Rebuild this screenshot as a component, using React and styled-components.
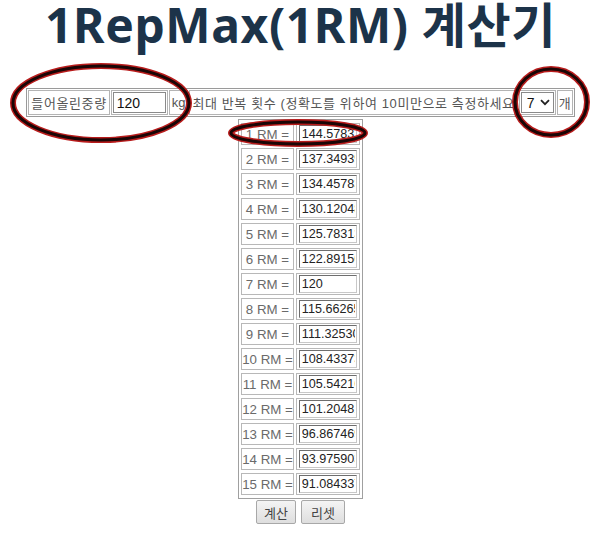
import React from "react";
import styled, { createGlobalStyle } from "styled-components";

const Global = createGlobalStyle`
  html, body { margin: 0; padding: 0; background: #fff; }
  body { font-family: "Liberation Sans", "Noto Sans CJK KR", sans-serif; }
`;

const Page = styled.div`
  position: relative;
  width: 601px;
  height: 537px;
  overflow: hidden;
  display: flex;
  flex-direction: column;
  align-items: center;
`;

const Title = styled.h1`
  margin: 0;
  font-family: "Noto Sans", "Noto Sans CJK KR", sans-serif;
  font-weight: 700;
  font-size: 48px;
  line-height: 50px;
  color: #1c3349;
  letter-spacing: 0.6px;
  white-space: nowrap;
`;

const InputBar = styled.table`
  margin-top: 38px;
  width: 547px;
  border: 1px solid #9a9a9a;
  border-spacing: 1px;
  font-size: 13px;
  color: #555;
  white-space: nowrap;
`;

const BarCell = styled.td`
  border: 1px solid #b4b4b4;
  padding: 1px ${(p) => (p.$tight ? 1 : 2)}px;
  height: 21px;
  text-align: left;
  letter-spacing: ${(p) => (p.$wide ? "0.6px" : "0")};
`;

const WeightInput = styled.input`
  box-sizing: border-box;
  width: 53px;
  height: 21px;
  border: 1px solid #8a8a8a;
  padding: 0 3px;
  font: 14px "Liberation Sans", sans-serif;
  color: #111;
  display: block;
`;

const SelectWrap = styled.div`
  position: relative;
  width: 33px;
  height: 21px;
`;

const RepSelect = styled.select`
  appearance: none;
  box-sizing: border-box;
  width: 33px;
  height: 21px;
  border: 1px solid #8a8a8a;
  background: #fff;
  padding: 0 0 0 5px;
  font: 14px "Liberation Sans", sans-serif;
  color: #111;
  display: block;
`;

const Chevron = styled.svg`
  position: absolute;
  right: 4px;
  top: 7px;
  pointer-events: none;
`;

const ResultTable = styled.table`
  border: 1px solid #a0a0a0;
  border-spacing: 2px 3px;
  margin-top: 2px;
  font-size: 13.3px;
`;

const LabelCell = styled.td`
  box-sizing: border-box;
  width: 52px;
  height: 22px;
  border: 1px solid #b8b8b8;
  padding: 0;
  text-align: center;
  color: #6a6a6a;
  white-space: nowrap;
`;

const ValueCell = styled.td`
  box-sizing: border-box;
  width: 64px;
  height: 22px;
  border: 1px solid #b8b8b8;
  padding: 1px 2px;
`;

const ValueInput = styled.input`
  box-sizing: border-box;
  display: block;
  width: 58px;
  height: 18px;
  border: 1px solid #6e6e6e;
  border-right-color: #c8c8c8;
  border-bottom-color: #c8c8c8;
  padding: 0 1px 0 2px;
  font: 12.6px "Liberation Sans", sans-serif;
  color: #222;
  background: #fff;
`;

const Buttons = styled.div`
  display: flex;
  gap: 5px;
  margin-top: 1px;
`;

const Btn = styled.button`
  box-sizing: border-box;
  height: 24px;
  width: ${(p) => p.$w}px;
  padding: 0;
  border: 1px solid #a8a8a8;
  border-radius: 2px;
  background: linear-gradient(#f4f4f4, #dedede);
  font: 13px "Noto Sans CJK KR", sans-serif;
  color: #444;
`;

const Marks = styled.svg`
  position: absolute;
  left: 0;
  top: 0;
  pointer-events: none;
`;

const base = 120 / 0.83;
const pct = [1, 0.95, 0.93, 0.9, 0.87, 0.85, 0.83, 0.8, 0.77, 0.75, 0.73, 0.7, 0.67, 0.65, 0.63];
const rows = pct.map((p, i) => ({
  n: i + 1,
  v: i === 6 ? "120" : String(base * p),
}));

const ellipses = [
  { cx: 101, cy: 103, rx: 88, ry: 37 },
  { cx: 551, cy: 102, rx: 36, ry: 33 },
  { cx: 298, cy: 133, rx: 67, ry: 11 },
];

export default function App() {
  return (
    <>
      <Global />
      <Page>
        <Title>1RepMax(1RM) 계산기</Title>
        <InputBar>
          <tbody>
            <tr>
              <BarCell $wide>들어올린중량</BarCell>
              <BarCell $tight style={{ width: 53 }}>
                <WeightInput defaultValue="120" />
              </BarCell>
              <BarCell>kg</BarCell>
              <BarCell $wide>최대 반복 횟수 (정확도를 위하여 10미만으로 측정하세요</BarCell>
              <BarCell $tight>
                <SelectWrap>
                  <RepSelect defaultValue="7">
                    {[1, 2, 3, 4, 5, 6, 7, 8, 9].map((n) => (
                      <option key={n} value={n}>{n}</option>
                    ))}
                  </RepSelect>
                  <Chevron width="10" height="7" viewBox="0 0 10 7">
                    <path d="M1 1.2 L5 5.2 L9 1.2" fill="none" stroke="#222" strokeWidth="1.8" />
                  </Chevron>
                </SelectWrap>
              </BarCell>
              <BarCell $tight>개</BarCell>
            </tr>
          </tbody>
        </InputBar>
        <ResultTable>
          <tbody>
            {rows.map((r) => (
              <tr key={r.n}>
                <LabelCell>{r.n} RM =</LabelCell>
                <ValueCell>
                  <ValueInput readOnly value={r.v} />
                </ValueCell>
              </tr>
            ))}
          </tbody>
        </ResultTable>
        <Buttons>
          <Btn $w={40}>계산</Btn>
          <Btn $w={44}>리셋</Btn>
        </Buttons>
        <Marks width="601" height="537" viewBox="0 0 601 537">
          {ellipses.map((e, i) => (
            <g key={i} fill="none">
              <ellipse {...e} stroke="#b81c1c" strokeWidth="6" />
              <ellipse {...e} stroke="#1a0606" strokeWidth="3" />
            </g>
          ))}
        </Marks>
      </Page>
    </>
  );
}
